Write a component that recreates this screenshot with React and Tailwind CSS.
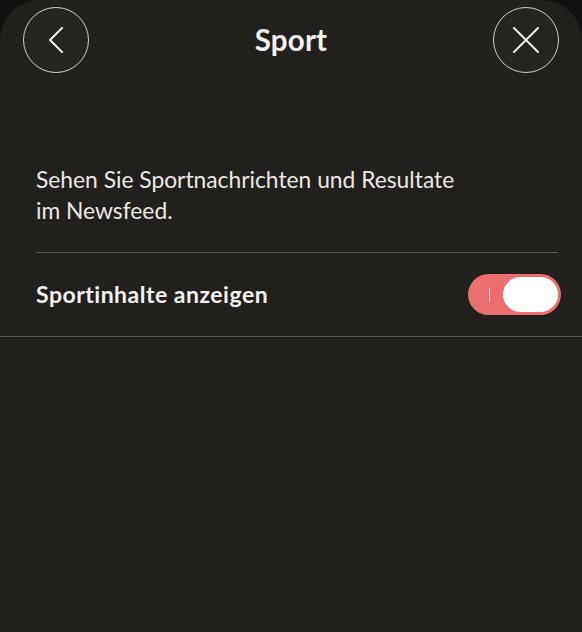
export default function App() {
  const font = { fontFamily: 'Lato, "Noto Sans", sans-serif' };
  return (
    <div className="min-h-[632px] w-full bg-[#111110]" style={font}>
      <div className="min-h-[632px] w-full rounded-t-[40px] bg-[#22201d] text-[#f2f1ef]">
        <header className="flex h-[80px] items-center justify-between px-[23px] pt-[0px]">
          <button className="flex h-[66px] w-[66px] items-center justify-center rounded-full border border-[#cfcdc9] bg-[#262420]">
            <svg width="26" height="26" viewBox="0 0 26 26" fill="none" stroke="#f4f4f2" strokeWidth="2" strokeLinecap="round" strokeLinejoin="round">
              <path d="M19 1 L7 13 L19 25" />
            </svg>
          </button>
          <h1 className="text-[29.5px] font-bold tracking-[0.2px]">Sport</h1>
          <button className="flex h-[66px] w-[66px] items-center justify-center rounded-full border border-[#cfcdc9] bg-[#262420]">
            <svg width="26" height="26" viewBox="0 0 26 26" fill="none" stroke="#f4f4f2" strokeWidth="2" strokeLinecap="round">
              <path d="M1 1 L25 25 M25 1 L1 25" />
            </svg>
          </button>
        </header>

        <p className="mx-[36px] mt-[84px] text-[22.8px] leading-[31px] text-[#ebe9e6]">
          Sehen Sie Sportnachrichten und Resultate
          <br />
          im Newsfeed.
        </p>
        <div className="mx-[36px] mr-[24px] mt-[26px] h-px bg-[#5a5855]" />

        <div className="flex h-[83px] items-center justify-between pl-[36px] pr-[21px]">
          <span className="text-[23px] font-bold tracking-[0.5px]">Sportinhalte anzeigen</span>
          <div className="flex h-[41px] w-[93px] items-center rounded-full bg-[#ec6e6e] p-[3px]">
            <span className="ml-[18px] h-[14px] w-px bg-[#fbdada]" />
            <span className="ml-auto h-[35px] w-[55px] rounded-full bg-white" />
          </div>
        </div>
        <div className="h-px bg-[#5a5855]" />
      </div>
    </div>
  );
}
